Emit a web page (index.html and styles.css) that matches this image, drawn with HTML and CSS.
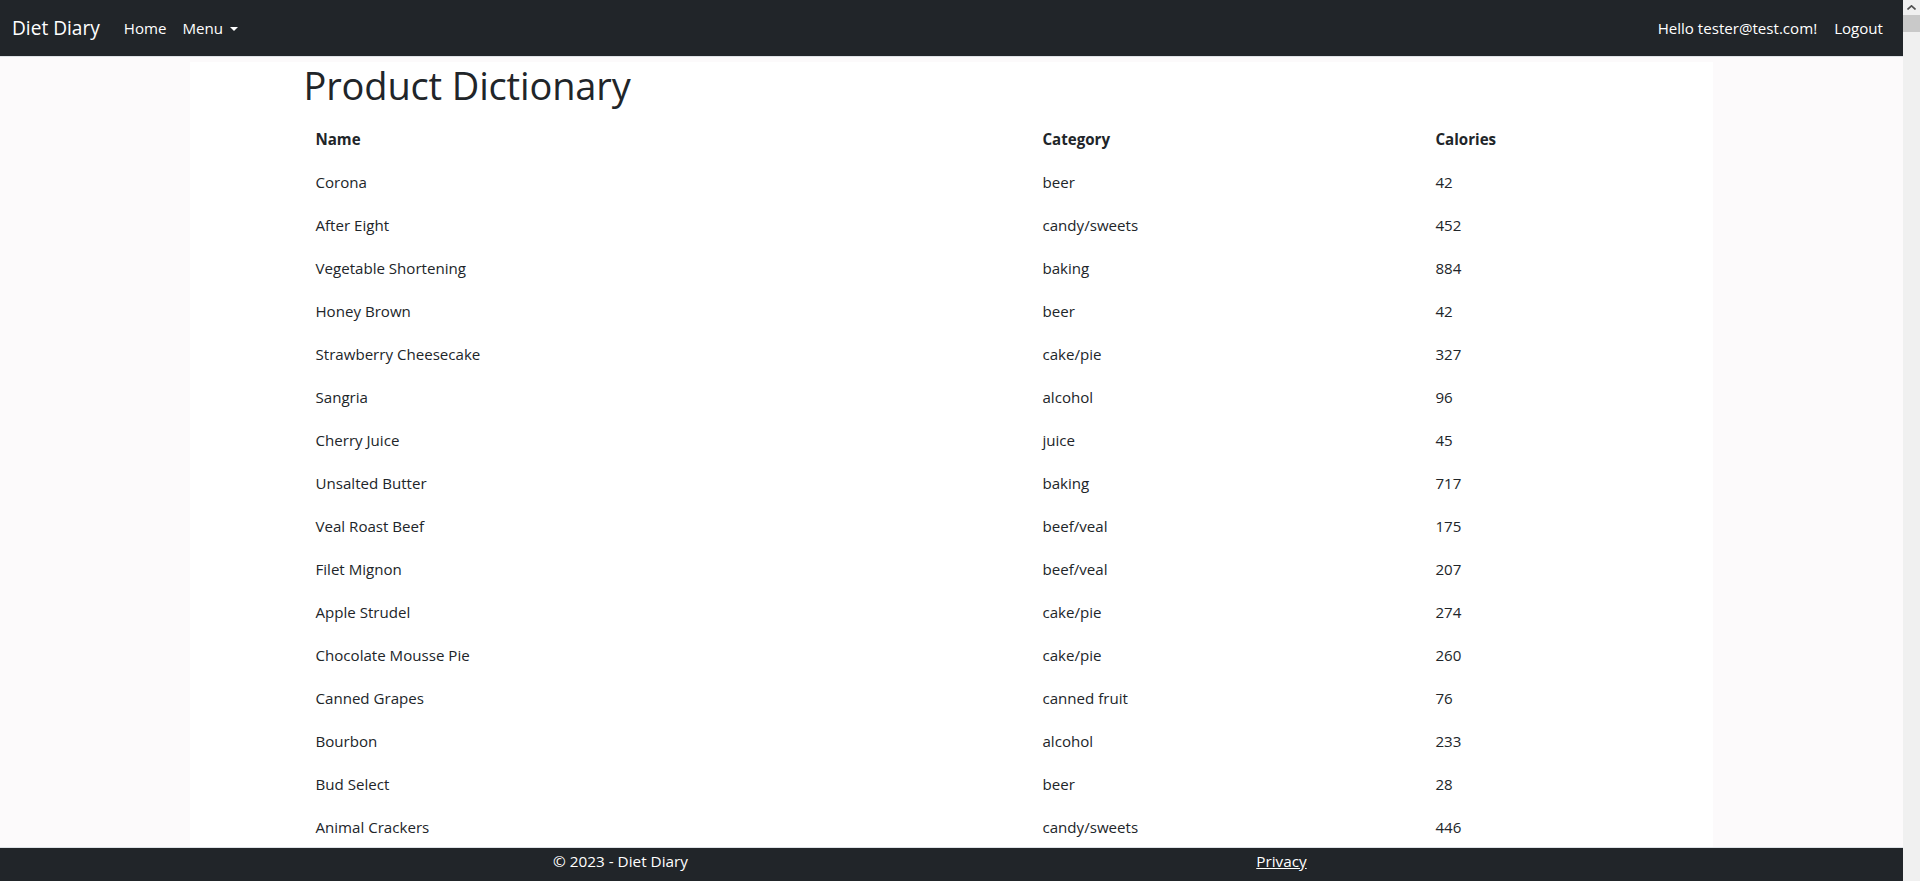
FILE: index.html
```html
<!DOCTYPE html>
<html lang="en">
<head>
<meta charset="utf-8">
<title>Product Dictionary - Diet Diary</title>
<link rel="stylesheet" href="styles.css">
</head>
<body>
<div class="screen">
  <div class="viewport">
    <nav class="navbar">
      <div class="nav-left">
        <a class="brand" href="#">Diet Diary</a>
        <a class="nav-link" href="#">Home</a>
        <a class="nav-link dropdown" href="#">Menu <span class="caret"></span></a>
      </div>
      <div class="nav-right">
        <span class="nav-link">Hello tester@test.com!</span>
        <a class="nav-link" href="#">Logout</a>
      </div>
    </nav>
    <div class="backdrop">
      <div class="sheet">
        <main class="container">
          <h1 class="title">Product Dictionary</h1>
          <table class="table">
            <colgroup>
              <col class="c-name"><col class="c-cat"><col class="c-cal">
            </colgroup>
            <thead>
              <tr><th>Name</th><th>Category</th><th>Calories</th></tr>
            </thead>
            <tbody>
              <tr><td>Corona</td><td>beer</td><td>42</td></tr>
              <tr><td>After Eight</td><td>candy/sweets</td><td>452</td></tr>
              <tr><td>Vegetable Shortening</td><td>baking</td><td>884</td></tr>
              <tr><td>Honey Brown</td><td>beer</td><td>42</td></tr>
              <tr><td>Strawberry Cheesecake</td><td>cake/pie</td><td>327</td></tr>
              <tr><td>Sangria</td><td>alcohol</td><td>96</td></tr>
              <tr><td>Cherry Juice</td><td>juice</td><td>45</td></tr>
              <tr><td>Unsalted Butter</td><td>baking</td><td>717</td></tr>
              <tr><td>Veal Roast Beef</td><td>beef/veal</td><td>175</td></tr>
              <tr><td>Filet Mignon</td><td>beef/veal</td><td>207</td></tr>
              <tr><td>Apple Strudel</td><td>cake/pie</td><td>274</td></tr>
              <tr><td>Chocolate Mousse Pie</td><td>cake/pie</td><td>260</td></tr>
              <tr><td>Canned Grapes</td><td>canned fruit</td><td>76</td></tr>
              <tr><td>Bourbon</td><td>alcohol</td><td>233</td></tr>
              <tr><td>Bud Select</td><td>beer</td><td>28</td></tr>
              <tr><td>Animal Crackers</td><td>candy/sweets</td><td>446</td></tr>
            </tbody>
          </table>
        </main>
      </div>
    </div>
    <footer class="footer">
      <div class="footer-inner">
        <span class="copy">&copy; 2023 - Diet Diary</span>
        <a class="privacy" href="#">Privacy</a>
      </div>
    </footer>
  </div>
  <div class="scrollbar">
    <div class="sb-arrow"><svg width="9" height="5" viewBox="0 0 9 5"><path d="M0.5 4.5 L4.5 0.8 L8.5 4.5" fill="none" stroke="#505050" stroke-width="1.6"/></svg></div>
    <div class="sb-thumb"></div>
  </div>
</div>
</body>
</html>
```

FILE: styles.css
```css
* { box-sizing: border-box; }
html, body { margin: 0; padding: 0; height: 100%; overflow: hidden; }
body {
  font-family: "Open Sans", "Noto Sans", sans-serif;
  color: #212529;
  background: #fff;
}
a { color: inherit; text-decoration: none; }

.screen { display: flex; width: 1920px; height: 881px; }
.viewport { flex: 1; display: flex; flex-direction: column; min-width: 0; }

.navbar {
  height: 57px;
  flex: none;
  background: #212529;
  border-bottom: 1px solid #dee2e6;
  display: flex;
  align-items: center;
  justify-content: space-between;
  padding: 0 12px 0 12px;
  color: #fff;
}
.nav-left, .nav-right { display: flex; align-items: center; }
.brand { font-size: 19.1px; margin-right: 16px; }
.nav-link { font-size: 15.1px; padding: 8px 8px; }
.nav-left .nav-link + .nav-link { padding-left: 8px; }
.dropdown { display: flex; align-items: center; }
.caret {
  display: inline-block;
  margin-left: 7px;
  border-top: 4.5px solid #fff;
  border-left: 4px solid transparent;
  border-right: 4px solid transparent;
  margin-top: 1px;
}
.nav-right .nav-link:first-child { margin-right: 1px; }

.backdrop {
  flex: 1;
  min-height: 0;
  overflow: hidden;
  background: #fcfafb;
}
.sheet {
  width: 80%;
  margin: 0 auto;
  min-height: 100%;
  background: #fff;
}
.container {
  max-width: 1320px;
  margin: 0 auto;
  padding: 0 12px;
}
.title {
  font-weight: 400;
  font-size: 38px;
  line-height: 46px;
  margin: 5px 0 9px;
  letter-spacing: -0.15px;
}
.table {
  width: 100%;
  table-layout: fixed;
  border-collapse: collapse;
  font-size: 15.1px;
}
.c-name { width: 727px; }
.c-cat { width: 393px; }
.c-cal { width: 176px; }
.table th, .table td {
  text-align: left;
  height: 43px;
  padding: 0 12px;
  vertical-align: middle;
}
.table th { font-weight: 700; }

.footer {
  flex: none;
  height: 34px;
  background: #212529;
  border-top: 1px solid #dee2e6;
  color: #fff;
  font-size: 15.3px;
}
.footer-inner {
  max-width: 1296px;
  margin: 0 auto;
  display: grid;
  grid-template-columns: 1fr 1fr;
  line-height: 26px;
}
.copy { justify-self: center; padding-right: 14px; }
.privacy { justify-self: center; padding-left: 12px; text-decoration: underline; }

.scrollbar {
  width: 17px;
  flex: none;
  background: #f0f0f0;
  display: flex;
  flex-direction: column;
}
.sb-arrow { height: 15px; display: flex; align-items: center; justify-content: center; }
.sb-thumb { height: 17px; background: #c9c9c9; }
```
